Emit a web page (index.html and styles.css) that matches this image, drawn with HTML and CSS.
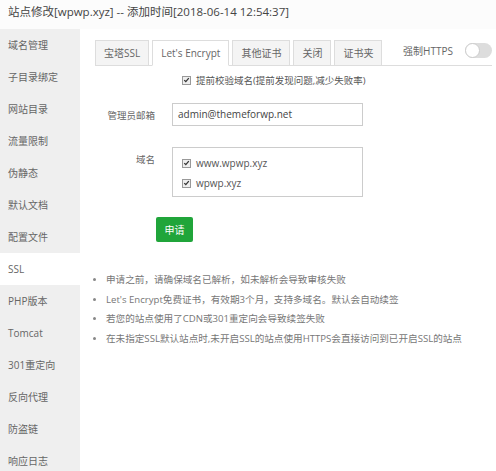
FILE: index.html
```html
<!DOCTYPE html>
<html lang="zh-CN">
<head>
<meta charset="utf-8">
<title>站点修改</title>
<link rel="stylesheet" href="styles.css">
</head>
<body>
<div class="title">站点修改[wpwp.xyz] -- 添加时间[2018-06-14 12:54:37]</div>
<div class="layout">
  <ul class="side">
    <li>域名管理</li>
    <li>子目录绑定</li>
    <li>网站目录</li>
    <li>流量限制</li>
    <li>伪静态</li>
    <li>默认文档</li>
    <li>配置文件</li>
    <li class="active">SSL</li>
    <li>PHP版本</li>
    <li>Tomcat</li>
    <li>301重定向</li>
    <li>反向代理</li>
    <li>防盗链</li>
    <li>响应日志</li>
  </ul>
  <div class="main">
    <div class="tabbar">
      <div class="tabs">
        <span class="tab">宝塔SSL</span>
        <span class="tab active">Let's Encrypt</span>
        <span class="tab">其他证书</span>
        <span class="tab">关闭</span>
        <span class="tab">证书夹</span>
      </div>
      <div class="force">
        <span class="force-label">强制HTTPS</span>
        <span class="switch"><span class="knob"></span></span>
      </div>
    </div>
    <div class="pre"><span class="cb"><svg viewBox="0 0 10 10" width="8" height="8"><path d="M1.8 5.2 L4 7.4 L8.3 2.3" fill="none" stroke="#333" stroke-width="1.8"/></svg></span>提前校验域名(提前发现问题,减少失败率)</div>
    <div class="row row-email">
      <label class="lbl">管理员邮箱</label>
      <div class="input">admin@themeforwp.net</div>
    </div>
    <div class="row row-domain">
      <label class="lbl lbl-top">域名</label>
      <div class="domains">
        <div class="dom"><span class="cb"><svg viewBox="0 0 10 10" width="8" height="8"><path d="M1.8 5.2 L4 7.4 L8.3 2.3" fill="none" stroke="#333" stroke-width="1.8"/></svg></span>www.wpwp.xyz</div>
        <div class="dom"><span class="cb"><svg viewBox="0 0 10 10" width="8" height="8"><path d="M1.8 5.2 L4 7.4 L8.3 2.3" fill="none" stroke="#333" stroke-width="1.8"/></svg></span>wpwp.xyz</div>
      </div>
    </div>
    <div class="btnrow"><button class="btn">申请</button></div>
    <ul class="tips">
      <li>申请之前，请确保域名已解析，如未解析会导致审核失败</li>
      <li>Let's Encrypt免费证书，有效期3个月，支持多域名。默认会自动续签</li>
      <li>若您的站点使用了CDN或301重定向会导致续签失败</li>
      <li>在未指定SSL默认站点时,未开启SSL的站点使用HTTPS会直接访问到已开启SSL的站点</li>
    </ul>
  </div>
</div>
</body>
</html>
```
FILE: styles.css
```css
* { box-sizing: border-box; }
html, body {
  margin: 0;
  padding: 0;
  width: 496px;
  height: 471px;
  overflow: hidden;
  background: #fff;
  font-family: "Open Sans", "Noto Sans CJK SC", sans-serif;
  color: #555;
}
.title {
  height: 29px;
  line-height: 24px;
  padding-left: 8px;
  font-size: 11.5px;
  color: #444;
  background: #fcfcfc;
  white-space: nowrap;
}
.layout {
  display: flex;
  height: 442px;
}
.side {
  list-style: none;
  margin: 0;
  padding: 0;
  width: 80px;
  flex: none;
  background: #efefef;
}
.side li {
  height: 32px;
  line-height: 32px;
  padding-left: 8px;
  font-size: 10px;
  color: #666;
  white-space: nowrap;
}
.side li.active { background: #fff; }
.main {
  flex: 1;
  padding: 11px 4px 0 15px;
}
.tabbar {
  display: flex;
  align-items: stretch;
  border-bottom: 1px solid #ddd;
  height: 26px;
}
.tabs {
  display: flex;
  gap: 3px;
}
.tab {
  height: 26px;
  line-height: 24px;
  padding: 0 8px;
  font-size: 10px;
  color: #666;
  background: #f4f4f4;
  border: 1px solid #ddd;
  white-space: nowrap;
}
.tab.active {
  background: #fff;
  border-bottom-color: #fff;
  padding: 0 8px;
}
.force {
  margin-left: auto;
  display: flex;
  align-items: center;
  gap: 12px;
  padding-bottom: 4px;
}
.force-label {
  font-size: 10px;
  color: #666;
}
.switch {
  width: 27px;
  height: 15px;
  border-radius: 8px;
  background: #ddd;
  display: flex;
  align-items: center;
  padding: 0;
}
.knob {
  width: 15px;
  height: 15px;
  border-radius: 50%;
  background: #fff;
  border: 1px solid #ccc;
}
.pre {
  display: flex;
  align-items: center;
  margin: 7px 0 0 87px;
  height: 14px;
  font-size: 9.5px;
  color: #555;
}
.cb {
  width: 9px;
  height: 9px;
  border: 1px solid #999;
  background: #eee;
  display: inline-flex;
  align-items: center;
  justify-content: center;
  margin-right: 5px;
  flex: none;
}
.cb svg { display: block; }
.row {
  display: flex;
  margin-left: -15px;
}
.lbl {
  width: 75px;
  text-align: right;
  margin-right: 17px;
  font-size: 9.5px;
  color: #666;
}
.row-email {
  margin-top: 16px;
  align-items: center;
}
.input {
  width: 191px;
  height: 23px;
  line-height: 21px;
  border: 1px solid #ccc;
  padding-left: 5px;
  font-size: 10px;
  color: #444;
}
.row-domain { margin-top: 21px; }
.lbl-top { padding-top: 6px; line-height: 14px; }
.domains {
  width: 191px;
  height: 50px;
  border: 1px solid #ccc;
  padding: 5px 0 0 9px;
}
.dom {
  display: flex;
  align-items: center;
  height: 20px;
  font-size: 10px;
  color: #555;
}
.btnrow {
  margin-top: 20px;
  padding-left: 61px;
}
.btn {
  width: 37px;
  height: 25px;
  border: none;
  border-radius: 2px;
  background: #20a53a;
  color: #fff;
  font-family: "Noto Sans CJK SC", sans-serif;
  font-size: 10px;
  padding: 0;
}
.tips {
  list-style: none;
  margin: 28px 0 0 0;
  padding: 0 0 0 11px;
}
.tips li {
  position: relative;
  line-height: 19.5px;
  font-size: 9.6px;
  color: #777;
  white-space: nowrap;
}
.tips li::before {
  content: "";
  position: absolute;
  left: -13px;
  top: 8px;
  width: 3px;
  height: 3px;
  border-radius: 50%;
  background: #888;
}
```
